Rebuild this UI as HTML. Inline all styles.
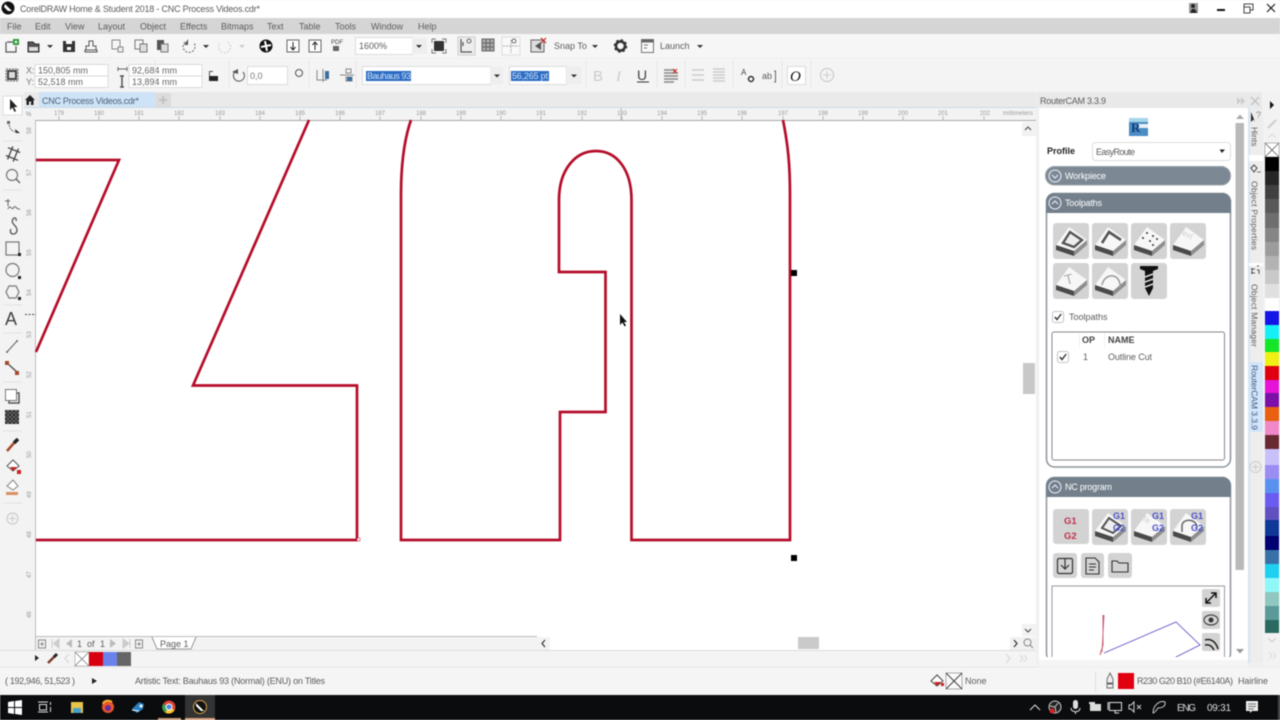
<!DOCTYPE html>
<html><head><meta charset="utf-8"><title>CorelDRAW</title>
<style>
html,body{margin:0;padding:0;width:1280px;height:720px;overflow:hidden;background:#f3f3f3}
svg{display:block;position:absolute;left:0;top:0;filter:blur(.4px)}
text{font-family:"Liberation Sans",sans-serif;font-size:9px}
text:not([fill]){fill:#5c5c5c}
.r text{font-size:6px;fill:#999}
.i{fill:none;stroke:#555;stroke-width:1.2}
.s{stroke:#d8d8d8;stroke-width:1}
</style></head><body>
<svg width="1280" height="720" viewBox="0 0 1280 720" xmlns="http://www.w3.org/2000/svg">
<defs>
<g id="blk"><rect width="36" height="36" rx="3" fill="#d3d3d3"/><path d="M3 22L16 4L34 17L21 28Z" fill="#f7f7f7"/><path d="M3 22L21 28V33L3 27Z" fill="#4a4a4a"/><path d="M21 28L34 17V22L21 33Z" fill="#8e8e8e"/></g>
<g id="chk"><rect x=".5" y=".5" width="11" height="11" rx="2" fill="#fff" stroke="#c4c4c4"/><path d="M2.8 6L5 8.5L9.2 3" fill="none" stroke="#333" stroke-width="1.400"/></g>
</defs>

<!-- title bar -->
<rect width="1280" height="18" fill="#fff"/>
<circle cx="8" cy="8" r="6.500" fill="#111"/><path d="M5 4L12 11L8 11L4 7Z" fill="#fff"/>
<text x="20" y="12" textLength="240">CorelDRAW Home &amp; Student 2018 - CNC Process Videos.cdr*</text>
<rect x="1189" y="3" width="9" height="10" fill="#999"/><circle cx="1193" cy="6" r="2" fill="#222"/><path d="M1190 13L1192 9H1195L1197 13Z" fill="#222"/>
<rect x="1217" y="9" width="8" height="2" fill="#111"/>
<path d="M1244 7V13H1250V7ZM1244 7V4H1253V10H1250" fill="none" stroke="#444"/>
<path d="M1267 4L1275 12M1275 4L1267 12" stroke="#222" stroke-width="1.200"/>

<!-- menu -->
<rect y="18" width="1280" height="16" fill="#d5d5d5"/>
<g>
<text x="7" y="29.500">File</text><text x="35" y="29.500">Edit</text><text x="65" y="29.500">View</text><text x="98" y="29.500">Layout</text><text x="140" y="29.500">Object</text><text x="180" y="29.500">Effects</text><text x="221" y="29.500">Bitmaps</text><text x="267" y="29.500">Text</text><text x="299" y="29.500">Table</text><text x="335" y="29.500">Tools</text><text x="371" y="29.500">Window</text><text x="418" y="29.500">Help</text>
</g>

<!-- toolbar -->
<rect y="34" width="1280" height="24" fill="#f6f6f6"/><rect y="57.500" width="1280" height="1" fill="#e8e8e8"/>
<path d="M7 42H13M6 42V52H16V46" class="i"/><rect x="13" y="39" width="6" height="6" fill="#2a9a3a"/><path d="M14.500 42H17.500M16 40.500V43.500" stroke="#fff"/>
<path d="M28 52V42H33L35 44H39V52Z" fill="#555" stroke="#333"/><rect x="29" y="47" width="9" height="4" fill="#ddd"/>
<path d="M47 45H53L50 48Z" fill="#333"/>
<path d="M63 41H75V52H63Z" fill="#333"/><rect x="66" y="41" width="6" height="3" fill="#fff"/><rect x="67" y="47" width="4" height="3" fill="#fff"/>
<path d="M86 50V46H89V41H93V46H96V50Z M85 50H97V52H85Z" fill="none" stroke="#555"/>
<rect x="112" y="40" width="8" height="9" fill="none" stroke="#888"/><rect x="118" y="47" width="5" height="5" fill="#eee" stroke="#888"/>
<rect x="135" y="40" width="8" height="9" fill="none" stroke="#777"/><rect x="140" y="44" width="7" height="8" fill="#ddd" stroke="#777"/>
<rect x="157" y="40" width="7" height="10" fill="#555"/><rect x="161" y="44" width="7" height="8" fill="#ddd" stroke="#777"/>
<path d="M185 42A6 6 0 1 0 194 43" fill="none" stroke="#666" stroke-dasharray="2 1.500"/><path d="M188 39V45H184Z" fill="#555"/><path d="M203 45H209L206 48Z" fill="#333"/>
<path d="M228 42A6 6 0 1 1 220 43" fill="none" stroke="#ccc" stroke-dasharray="2 1.500"/><path d="M239 45H245L242 48Z" fill="#ccc"/>
<circle cx="266" cy="46" r="6.500" fill="#111"/><path d="M261 47L266 46L265 41M271 45L266 46L267 51" stroke="#fff" stroke-width="2" fill="none"/>
<rect x="287" y="40" width="12" height="12" fill="#fff" stroke="#666"/><path d="M293 42V49M290.500 47L293 50L295.500 47" fill="none" stroke="#222"/>
<rect x="309" y="40" width="12" height="12" fill="#fff" stroke="#666"/><path d="M315 50V43M312.500 45L315 42L317.500 45" fill="none" stroke="#222"/>
<text x="331" y="44" style="font-size:6px" fill="#444">PDF</text><rect x="333" y="46" width="6" height="5" fill="#666"/>
<rect x="355.500" y="37.500" width="57" height="17" fill="#fff" stroke="#ddd"/><text x="359" y="49">1600%</text>
<rect x="412" y="38" width="15" height="16" fill="#eee"/><path d="M416 45H422L419 48Z" fill="#333"/>
<rect x="434" y="41" width="10" height="10" fill="#333"/><path d="M432 39H436M432 39V43M442 39H446V43M432 49V53H436M446 49V53H442" fill="none" stroke="#777"/>
<rect x="458" y="37" width="17" height="18" fill="#eee" stroke="#ccc"/><path d="M461 39V52H472M463 42V46" class="i"/><circle cx="469" cy="41" r="2" fill="none" stroke="#666"/>
<path d="M482 39H494V51H482ZM482 43H494M482 47H494M486 39V51M490 39V51" stroke="#666" fill="#aaa"/>
<rect x="502" y="37" width="18" height="18" fill="#f9f9f9" stroke="#ddd"/><path d="M503 46H519M511 40V53" stroke="#aaa" stroke-dasharray="2 1"/><circle cx="514" cy="41" r="2" fill="none" stroke="#666"/>
<rect x="531" y="40" width="13" height="12" fill="#ddd" stroke="#666"/><path d="M535 46L541 42V50Z" fill="#555"/><path d="M541 38L546 43M546 38L541 43" stroke="#c22" stroke-width="1.200"/>
<text x="554" y="49">Snap To</text><path d="M592 45H598L595 48Z" fill="#333"/>
<circle cx="620.500" cy="46" r="4.500" fill="none" stroke="#333" stroke-width="2.500"/><circle cx="620.500" cy="46" r="6" fill="none" stroke="#333" stroke-width="1.500" stroke-dasharray="2.500 2.200"/>
<rect x="641.500" y="39.500" width="12" height="13" fill="#f8f8f8" stroke="#777"/><rect x="641.500" y="39.500" width="12" height="3" fill="#666"/><path d="M644 45H648M644 48H647" stroke="#777"/>
<text x="660" y="49">Launch</text><path d="M697 45H703L700 48Z" fill="#333"/>

<!-- property bar -->
<rect y="58" width="1280" height="34" fill="#f4f4f4"/>
<rect x="7" y="70" width="10" height="10" fill="#444"/><rect x="9" y="72" width="6" height="6" fill="#ddd"/><path d="M6 69H18V81H6Z" fill="none" stroke="#666" stroke-dasharray="2 1"/>
<text x="26" y="73.500" fill="#777">X:</text><text x="26" y="85" fill="#777">Y:</text>
<rect x="35" y="64.500" width="73" height="23" fill="#fff" stroke="#ddd"/><path d="M35 76H108" class="s"/>
<text x="38" y="73.500" fill="#666">150,805 mm</text><text x="38" y="85" fill="#666">52,518 mm</text>
<path d="M118 69H127M118 67V71M127 67V71" stroke="#666"/><path d="M122 76V87M120 76H124M120 87H124" stroke="#555" stroke-width="1.500"/>
<rect x="129" y="64.500" width="73" height="23" fill="#fff" stroke="#ddd"/><path d="M129 76H202" class="s"/>
<text x="132" y="73.500" fill="#666">92,684 mm</text><text x="132" y="85" fill="#666">13,894 mm</text>
<rect x="209" y="76" width="9" height="5" fill="#222"/><path d="M209.500 76V71.500H213" fill="none" stroke="#555"/>
<path d="M243 72A5.500 5.500 0 1 1 236 71" fill="none" stroke="#555"/><path d="M232 72L238 69V74Z" fill="#555"/>
<rect x="247.500" y="66.500" width="40" height="18" fill="#fff" stroke="#ddd"/><text x="250" y="79" fill="#777">0,0</text>
<circle cx="299" cy="73" r="3.500" fill="none" stroke="#555"/>
<path d="M317 70V80H327M323 69V82" fill="none" stroke="#888"/><rect x="325" y="71" width="4" height="8" fill="#3a6fa0"/>
<path d="M340 75H354M346 69H351V73H346ZM346 77H352V81H346Z" fill="none" stroke="#888"/><rect x="347" y="77" width="5" height="4" fill="#3a6fa0"/>
<rect x="362.500" y="66.500" width="128" height="18" fill="#fff" stroke="#ddd"/>
<rect x="366" y="71" width="45" height="10" fill="#2b6cc4"/><text x="367" y="79" fill="#cfe0f5" textLength="44">Bauhaus 93</text>
<rect x="490" y="67" width="13" height="17" fill="#eee"/><path d="M494 74.500H500L497 77.500Z" fill="#333"/>
<rect x="509.500" y="66.500" width="57" height="18" fill="#fff" stroke="#ddd"/>
<rect x="511" y="71" width="38" height="10" fill="#2b6cc4"/><text x="512" y="79" fill="#cfe0f5" textLength="36">56,265 pt</text>
<rect x="566.500" y="67" width="15" height="17" fill="#eee"/><path d="M571 74.500H577L574 77.500Z" fill="#333"/>
<text x="593" y="81" style="font-size:15px" fill="#ccc">B</text>
<text x="616" y="81" style="font-size:15px;font-family:'Liberation Serif',serif;font-style:italic" fill="#ccc">I</text>
<text x="637" y="80" style="font-size:14px" fill="#444">U</text><rect x="637" y="81.500" width="12" height="1" fill="#333"/>
<path d="M664 70H675M664 73H678M664 76H678M664 79H678M664 82H674" stroke="#888" stroke-width="1.500"/><path d="M673 69L677 73M677 69L673 73" stroke="#c22"/>
<path d="M692 70H704M692 75H704M692 80H704" stroke="#ccc" stroke-width="1.500"/>
<path d="M713 69H725M713 72H725M713 75H725M713 78H725M713 81H725" stroke="#ccc" stroke-width="1.500"/>
<text x="741" y="75" style="font-size:8px" fill="#444">A</text><circle cx="751" cy="79" r="2.500" fill="none" stroke="#333" stroke-width="1.500"/>
<text x="762" y="79" style="font-size:9px">ab</text><path d="M774 71H775.500V82H774" stroke="#666" fill="none"/>
<rect x="787.500" y="66.500" width="18" height="18" fill="#fff" stroke="#ddd"/><text x="790" y="81" style="font-size:15px;font-style:italic;font-family:'Liberation Serif',serif" fill="#111">O</text>
<circle cx="827" cy="75" r="6.500" fill="none" stroke="#ccc" stroke-width="1.200"/><path d="M823 75H831M827 71V79" stroke="#ccc"/>
<path d="M155 60V88M229 60V88M309 60V88M356 60V88M586 60V88M657 60V88M685 60V88M733 60V88M782 60V88M811 60V88" stroke="#e8e8e8" fill="none"/>

<!-- tab bar -->
<rect y="92" width="1036" height="16" fill="#eaeaea"/>
<rect x="0" y="92" width="24" height="558" fill="#f3f3f3"/>
<rect x="39" y="92" width="116" height="15.500" fill="#cfe3f7"/>
<path d="M30 95L25 100H26.500V105H29V101.500H31V105H33.500V100H35Z" fill="#222"/>
<text x="42" y="104" fill="#4a6278" textLength="97">CNC Process Videos.cdr*</text>
<rect x="155" y="93" width="16" height="14" fill="#dcdcdc"/><path d="M159 100H167M163 96V104" stroke="#bbb" stroke-width="1.500"/>
<rect x="24" y="107" width="1012" height="1.500" fill="#c9dbea"/>

<!-- rulers -->
<rect x="24" y="108" width="1012" height="12" fill="#f3f3f3"/>
<rect x="24" y="108" width="12" height="542" fill="#f3f3f3"/>
<rect x="36" y="120" width="1000" height="530" fill="#fff"/>
<rect x="35" y="120" width="1001" height="1" fill="#a8a8a8"/>
<rect x="35" y="120" width="1" height="530" fill="#bcbcbc"/>
<g class="r">
<text x="54" y="115">179</text><text x="94" y="115">180</text><text x="134" y="115">181</text><text x="174" y="115">182</text><text x="215" y="115">183</text><text x="255" y="115">184</text><text x="295" y="115">185</text><text x="335" y="115">186</text><text x="375" y="115">187</text><text x="416" y="115">188</text><text x="456" y="115">189</text><text x="496" y="115">190</text><text x="536" y="115">191</text><text x="577" y="115">192</text><text x="617" y="115">193</text><text x="657" y="115">194</text><text x="697" y="115">195</text><text x="737" y="115">196</text><text x="778" y="115">197</text><text x="818" y="115">198</text><text x="858" y="115">199</text><text x="898" y="115">200</text><text x="938" y="115">201</text><text x="980" y="115">202</text>
<text x="1003" y="115" textLength="30">millimeters</text>
</g>
<path d="M59 116V120M99 116V120M139 116V120M179 116V120M220 116V120M260 116V120M300 116V120M340 116V120M380 116V120M421 116V120M461 116V120M501 116V120M541 116V120M582 116V120M622 116V120M662 116V120M702 116V120M742 116V120M783 116V120M823 116V120M863 116V120M903 116V120M943 116V120M984 116V120M621 108V120" stroke="#bbb"/>
<g class="r">
<text transform="translate(31,134) rotate(-90)">58</text><text transform="translate(31,176) rotate(-90)">57</text><text transform="translate(31,216) rotate(-90)">56</text><text transform="translate(31,256) rotate(-90)">55</text><text transform="translate(31,296) rotate(-90)">54</text><text transform="translate(31,338) rotate(-90)">53</text><text transform="translate(31,378) rotate(-90)">52</text><text transform="translate(31,418) rotate(-90)">51</text><text transform="translate(31,458) rotate(-90)">50</text><text transform="translate(31,498) rotate(-90)">49</text><text transform="translate(31,538) rotate(-90)">48</text><text transform="translate(31,578) rotate(-90)">47</text><text transform="translate(31,618) rotate(-90)">46</text>
</g>
<path d="M25 314.500H36" stroke="#444" stroke-dasharray="2 1.500"/>
<text x="26" y="116" style="font-size:6px" fill="#888">%</text>

<!-- artwork -->
<g fill="none" stroke="#b50d2a" stroke-width="2.700" stroke-linejoin="miter">
<path d="M36 160H119L36 352"/>
<path d="M309 120L193 385.500H357V540H36"/>
<path d="M411 120C404 140 401 165 401 195V540H560V412H605.500V272H559V200C559 170 575 151 596 151C617 151 631.500 170 631.500 200V540H790V195C790 165 788 145 783 120"/>
</g>
<rect x="791" y="270" width="6" height="6" fill="#000"/><rect x="791" y="555" width="6" height="6" fill="#000"/>
<rect x="357" y="538" width="3" height="3" fill="#fff" stroke="#b9122e" stroke-width=".5"/>
<path d="M620 314V325L622.500 322.500L624.500 326.500L626 325.500L624 322H627Z" fill="#111"/>

<!-- v/h scroll -->
<rect x="1022" y="122" width="14" height="14" fill="#f2f2f2"/><path d="M1025 130L1028 127L1031 130" fill="none" stroke="#444"/>
<rect x="1023" y="363" width="12" height="31" fill="#c8c8c8"/>
<rect x="1022" y="624" width="14" height="12" fill="#f2f2f2"/><path d="M1025 629L1028 632L1031 629" fill="none" stroke="#444"/>

<!-- page nav -->
<rect x="36" y="637" width="500" height="13" fill="#f3f3f3"/><path d="M36 636.500H537" stroke="#bdbdbd"/>
<rect x="536" y="637" width="14" height="13" fill="#f3f3f3"/><path d="M545 640L542 643.500L545 647" fill="none" stroke="#333" stroke-width="1.200"/>
<rect x="38.500" y="640" width="7" height="8" fill="none" stroke="#888"/><path d="M42 642V646M40 644H44" stroke="#888"/>
<path d="M52 639V648M59 639L53.500 643.500L59 648Z" fill="#ccc" stroke="#ccc"/>
<path d="M72 639L66 643.500L72 648Z" fill="#bbb"/>
<text x="77" y="647">1</text><text x="87" y="647">of</text><text x="100" y="647">1</text>
<path d="M110 639L116 643.500L110 648Z" fill="#bbb"/>
<path d="M123 639L129 643.500L123 648ZM130 639V648" fill="#ccc" stroke="#ccc"/>
<rect x="135.500" y="640" width="7" height="8" fill="none" stroke="#888"/><path d="M139 642V646M137 644H141" stroke="#888"/>
<path d="M152 637L157 649H191L196 637" fill="#fff" stroke="#999"/><text x="160" y="647">Page 1</text>
<rect x="798" y="637" width="21" height="12" fill="#cacaca"/>
<rect x="1010" y="637" width="26" height="13" fill="#f1f1f1"/>
<path d="M1014 640L1017 643.500L1014 647" fill="none" stroke="#333" stroke-width="1.200"/>
<circle cx="1027.500" cy="642.500" r="3.500" fill="none" stroke="#888"/><path d="M1030 645L1033 648" stroke="#888"/>
<path d="M0 650.500H1036" stroke="#dcdcdc"/>

<!-- bottom palette -->
<rect y="651" width="1036" height="16" fill="#f4f4f4"/>
<path d="M35 655V661L39 658Z" fill="#222"/>
<path d="M48 663L55 656" stroke="#7a3d2a" stroke-width="2.500"/><path d="M54 657L57 654" stroke="#222" stroke-width="3"/>
<path d="M69 654L65 658.500L69 663" fill="none" stroke="#ddd" stroke-width="1.500"/>
<rect x="75" y="652" width="14" height="14" fill="#fff" stroke="#999" stroke-width=".6"/><path d="M75 652L89 666M89 652L75 666" stroke="#777" stroke-width=".8"/>
<rect x="89" y="652" width="14" height="14" fill="#d80010"/><rect x="103" y="652" width="14" height="14" fill="#6b82ea"/><rect x="117" y="652" width="14" height="14" fill="#666"/>
<path d="M1006 654L1010 658.500L1006 663" fill="none" stroke="#ddd" stroke-width="1.500"/>
<path d="M1020 655L1023 658.500L1020 662M1024 655L1027 658.500L1024 662" fill="none" stroke="#ddd" stroke-width="1.200"/>

<!-- status bar -->
<rect y="667" width="1280" height="28" fill="#f5f5f5"/><path d="M0 667H1280" stroke="#e6e6e6"/>
<text x="5" y="684" textLength="70">( 192,946, 51,523 )</text>
<path d="M92 678V684L97 681Z" fill="#222"/>
<text x="135" y="684" textLength="190">Artistic Text: Bauhaus 93 (Normal) (ENU) on Titles</text>
<path d="M931 681L937 675L943 681L937 686Z" fill="#fff" stroke="#444"/><path d="M934 682H941L937 686Z" fill="#c22"/><rect x="941" y="683" width="3" height="3" fill="#c22"/>
<rect x="946" y="673" width="16" height="16" fill="#fafafa" stroke="#777" stroke-width=".6"/><path d="M946 673L962 689M962 673L946 689" stroke="#444"/>
<text x="965" y="684">None</text>
<path d="M1095.500 672V692" stroke="#e0e0e0"/>
<path d="M1110 673L1113 679V683H1107V679ZM1107 684H1113V688H1107Z" fill="#eee" stroke="#666" stroke-width=".9"/>
<rect x="1118" y="673" width="16" height="16" fill="#e0000f"/>
<text x="1137" y="684" textLength="96">R230 G20 B10 (#E6140A)</text>
<text x="1238" y="684" textLength="30">Hairline</text>

<!-- docker -->
<rect x="1036" y="92" width="3" height="570" fill="#eef0f2"/>
<rect x="1037" y="92" width="225" height="16" fill="#e9e9e9"/>
<rect x="1039" y="108" width="209" height="554" fill="#fff"/>
<rect x="1036" y="660" width="228" height="7" fill="#f0f0f0"/>
<text x="1040" y="104" textLength="66">RouterCAM 3.3.9</text>
<path d="M1237 97L1241 101L1237 105ZM1241 97L1245 101L1241 105Z" fill="#ccc"/><path d="M1251 97L1259 105M1259 97L1251 105" stroke="#bbb" stroke-width="1.200"/>
<rect x="1129" y="118" width="19" height="18" fill="#4a8cc4"/><rect x="1129" y="118" width="19" height="4" fill="#a5d5e8"/><rect x="1138" y="124" width="10" height="4" fill="#e6f2f8"/><text x="1131" y="132" style="font-size:13px;font-weight:bold;font-family:'Liberation Serif',serif" fill="#143a7a">R</text>
<text x="1047" y="154" style="font-weight:bold" fill="#222">Profile</text>
<rect x="1092.500" y="142.500" width="138" height="18" rx="3" fill="#fff" stroke="#ddd"/><text x="1096" y="155" textLength="39">EasyRoute</text>
<path d="M1219.500 149.500H1225L1222 153Z" fill="#222"/>
<rect x="1045.500" y="166.500" width="185" height="18.500" rx="9" fill="#7c8994" stroke="#9aa3aa"/>
<circle cx="1055" cy="176" r="6" fill="none" stroke="#eef" stroke-width="1"/><path d="M1052 175L1055 178L1058 175" fill="none" stroke="#eef"/>
<text x="1065" y="179" fill="#fff" textLength="41">Workpiece</text>

<rect x="1046.500" y="193.500" width="184" height="273.500" rx="8" fill="#fff" stroke="#8c949b" stroke-width="1.500"/>
<path d="M1046 213V202C1046 196 1050 193 1054 193H1222C1227 193 1231 196 1231 202V213Z" fill="#73808c"/>
<circle cx="1055" cy="203" r="6" fill="none" stroke="#eef"/><path d="M1052 204L1055 201L1058 204" fill="none" stroke="#eef"/>
<text x="1065" y="206" fill="#fff" textLength="37">Toolpaths</text>

<use href="#blk" x="1053" y="223"/><path d="M1063 243L1070 232L1082 240L1074 247Z" fill="#eee" stroke="#555" stroke-width="2.400"/>
<use href="#blk" x="1092" y="223"/><path d="M1102 243L1109 232L1121 240" fill="none" stroke="#555" stroke-width="2.600"/>
<use href="#blk" x="1131" y="223"/><g fill="#333"><circle cx="1147" cy="233" r="1"/><circle cx="1153" cy="236" r="1"/><circle cx="1143" cy="238" r="1"/><circle cx="1150" cy="241" r="1"/><circle cx="1157" cy="239" r="1"/><circle cx="1153" cy="245" r="1"/></g>
<use href="#blk" x="1170" y="223"/><text transform="translate(1178,233) rotate(25)" style="font-size:8px" fill="#ccc">Text</text>
<use href="#blk" x="1053" y="263"/><text transform="translate(1066,285) rotate(-15)" style="font-size:14px" fill="#aaa">T</text>
<use href="#blk" x="1092" y="263"/><path d="M1102 285C1104 274 1118 272 1120 284V288" fill="none" stroke="#999" stroke-width="1.500"/>
<rect x="1131" y="263" width="36" height="36" rx="3" fill="#d3d3d3"/>
<path d="M1140 266H1158V269L1153 271H1145L1140 269Z" fill="#111"/><path d="M1145 271H1153V288L1149 296L1145 288Z" fill="#111"/><path d="M1145 277L1153 274M1145 282L1153 279M1145 287L1153 284" stroke="#ddd" stroke-width="1.500"/>

<use href="#chk" x="1052" y="311"/><text x="1069" y="320">Toolpaths</text>
<rect x="1052" y="332" width="172.500" height="128" rx="2" fill="#fff" stroke="#888"/>
<path d="M1079.500 334V347M1104.500 334V347" stroke="#eee"/>
<text x="1082" y="343" style="font-weight:bold" fill="#444">OP</text><text x="1108" y="343" style="font-weight:bold" fill="#444">NAME</text>
<use href="#chk" x="1057" y="351"/><text x="1083" y="360">1</text><text x="1108" y="360" textLength="44">Outline Cut</text>

<rect x="1046.500" y="477.500" width="184" height="184" rx="8" fill="#fff" stroke="#8c949b" stroke-width="1.500"/>
<path d="M1046 497V486C1046 480 1050 477 1054 477H1222C1227 477 1231 480 1231 486V497Z" fill="#73808c"/>
<circle cx="1055" cy="487" r="6" fill="none" stroke="#eef"/><path d="M1052 488L1055 485L1058 488" fill="none" stroke="#eef"/>
<text x="1065" y="490" fill="#fff" textLength="47">NC program</text>

<rect x="1053" y="509" width="36" height="35" rx="3" fill="#d3d3d3"/>
<text x="1064" y="524" style="font-weight:bold;font-size:9.500px" fill="#c03050">G1</text><text x="1064" y="539" style="font-weight:bold;font-size:9.500px" fill="#c03050">G2</text>
<use href="#blk" x="1092" y="509"/><path d="M1102 528L1109 518L1121 526L1113 533Z" fill="#eee" stroke="#555" stroke-width="2"/><text x="1113" y="519" style="font-weight:bold" fill="#4a50c8">G1</text><text x="1113" y="531" style="font-weight:bold" fill="#4a50c8">G2</text>
<use href="#blk" x="1131" y="509"/><text transform="translate(1141,520) rotate(25)" style="font-size:8px" fill="#ccc">Te</text><text x="1152" y="519" style="font-weight:bold" fill="#4a50c8">G1</text><text x="1152" y="531" style="font-weight:bold" fill="#4a50c8">G2</text>
<use href="#blk" x="1170" y="509"/><path d="M1182 532V526C1182 518 1197 518 1197 528" fill="none" stroke="#666" stroke-width="1.500"/><text x="1191" y="519" style="font-weight:bold" fill="#4a50c8">G1</text><text x="1191" y="531" style="font-weight:bold" fill="#4a50c8">G2</text>

<rect x="1053" y="553" width="24" height="25" rx="3" fill="#d3d3d3"/><rect x="1057.500" y="558.500" width="15" height="15" rx="1.500" fill="none" stroke="#333" stroke-width="1.200"/><path d="M1065 559V569M1061 565L1065 569L1069 565" fill="none" stroke="#333" stroke-width="1.200"/>
<rect x="1081" y="553" width="23" height="25" rx="3" fill="#d3d3d3"/><path d="M1086 558H1095L1099 562V574H1086ZM1089 564H1096M1089 567H1096M1089 570H1094" fill="none" stroke="#333" stroke-width="1.100"/>
<rect x="1108" y="553" width="24" height="25" rx="3" fill="#d3d3d3"/><path d="M1112 572V561H1117L1119 563H1128V572Z" fill="none" stroke="#333" stroke-width="1.100"/>

<rect x="1052" y="586" width="172.500" height="80" fill="#fff" stroke="#999"/>
<path d="M1103 615V645L1100 655" fill="none" stroke="#c8506a" stroke-width="1"/><path d="M1104 615L1102 652" stroke="#d06a80" stroke-width="1"/>
<path d="M1104 653L1176 622L1200 645L1174 658" fill="none" stroke="#5a4ac0" stroke-width=".8"/>
<rect x="1202" y="589" width="18" height="18" rx="2" fill="#d3d3d3"/><path d="M1206 603L1216 593M1206 598V603H1211M1211 593H1216V598" fill="none" stroke="#111" stroke-width="1.500"/>
<rect x="1202" y="611" width="18" height="18" rx="2" fill="#d3d3d3"/><ellipse cx="1211" cy="620" rx="7" ry="5" fill="none" stroke="#333"/><circle cx="1211" cy="620" r="2.500" fill="#333"/>
<rect x="1202" y="633" width="18" height="18" rx="2" fill="#d3d3d3"/><path d="M1205 640C1211 638 1216 642 1218 649M1205 645C1209 644 1212 646 1214 650" fill="none" stroke="#222" stroke-width="1.500"/>
<rect x="1039" y="657" width="209" height="10" fill="#f5f5f5"/>
<rect x="1039" y="657" width="209" height="3" fill="#fff"/>

<rect x="1235" y="111" width="10" height="546" fill="#fff"/>
<rect x="1235.500" y="123" width="8.500" height="447" fill="#b9b9b9"/>
<path d="M1236 119L1240 114.500L1244 119Z" fill="#aaa"/><path d="M1236 649H1244L1240 653.500Z" fill="#999"/>

<!-- vertical tabs -->
<rect x="1248" y="108" width="3" height="555" fill="#d7e4f0"/>
<rect x="1250" y="108" width="13" height="555" fill="#ededed"/>
<rect x="1249" y="362" width="14" height="70" fill="#d3e5f8"/>
<rect x="1249" y="155" width="14" height="6" fill="#fff"/><rect x="1249" y="263" width="14" height="3" fill="#fff"/>
<path d="M1251 112V122L1253.500 119.500L1255 122" fill="#222"/><text x="1256" y="118" style="font-size:9px" fill="#888">?</text>
<text transform="translate(1251.500,127) rotate(90)" style="font-size:8.500px">Hints</text>
<path d="M1251 168L1254 165L1257 168L1254 172Z" fill="none" stroke="#444"/><path d="M1257 172H1261" stroke="#777"/>
<text transform="translate(1251.500,181) rotate(90)" style="font-size:8.500px" textLength="69">Object Properties</text>
<path d="M1251 269H1255M1251 273H1255M1252 268V274M1257 270H1259V274M1257 266H1259" stroke="#555" fill="none"/>
<text transform="translate(1251.500,284) rotate(90)" style="font-size:8.500px" textLength="63">Object Manager</text>
<text transform="translate(1251.500,365) rotate(90)" style="font-size:8.500px" textLength="65" fill="#3a5a80">RouterCAM 3.3.9</text>
<circle cx="1255.500" cy="467" r="5.500" fill="none" stroke="#ccc"/><path d="M1252 467H1259M1255.500 463.500V470.500" stroke="#ccc"/>

<!-- palette -->
<rect x="1263" y="92" width="17" height="575" fill="#f2f2f2"/>
<path d="M1270 101V109L1274 105Z" fill="#111"/>
<path d="M1268 128L1276 120" stroke="#ccc" stroke-width="2"/>
<path d="M1268 138L1272 134L1276 138" fill="none" stroke="#ddd"/>
<rect x="1265" y="143" width="14" height="14" fill="#fff" stroke="#888" stroke-width=".6"/><path d="M1265 143L1279 157M1279 143L1265 157" stroke="#666" stroke-width=".8"/>
<g>
<rect x="1265" y="157" width="14" height="14" fill="#000"/><rect x="1265" y="171" width="14" height="14" fill="#262626"/><rect x="1265" y="185" width="14" height="14" fill="#404040"/><rect x="1265" y="199" width="14" height="14" fill="#595959"/><rect x="1265" y="213" width="14" height="15" fill="#6e6e6e"/><rect x="1265" y="228" width="14" height="14" fill="#858585"/><rect x="1265" y="242" width="14" height="14" fill="#9c9c9c"/><rect x="1265" y="256" width="14" height="14" fill="#b3b3b3"/><rect x="1265" y="270" width="14" height="14" fill="#c9c9c9"/><rect x="1265" y="284" width="14" height="14" fill="#e0e0e0"/><rect x="1265" y="298" width="14" height="13" fill="#fff"/>
<rect x="1265" y="311" width="14" height="14" fill="#1414e6"/><rect x="1265" y="325" width="14" height="14" fill="#14f0f5"/><rect x="1265" y="339" width="14" height="13" fill="#14e628"/><rect x="1265" y="352" width="14" height="14" fill="#f0f014"/><rect x="1265" y="366" width="14" height="14" fill="#e00010"/><rect x="1265" y="380" width="14" height="13" fill="#e614d8"/><rect x="1265" y="393" width="14" height="14" fill="#7a10a8"/><rect x="1265" y="407" width="14" height="14" fill="#e86010"/><rect x="1265" y="421" width="14" height="14" fill="#f088c8"/><rect x="1265" y="435" width="14" height="14" fill="#682a30"/><rect x="1265" y="449" width="14" height="16" fill="#c8c0f8"/>
<rect x="1265" y="465" width="14" height="14" fill="#9a8cf0"/><rect x="1265" y="479" width="14" height="14" fill="#5a90f0"/><rect x="1265" y="493" width="14" height="14" fill="#6a5cf0"/><rect x="1265" y="507" width="14" height="13" fill="#6050c0"/><rect x="1265" y="520" width="14" height="16" fill="#103898"/><rect x="1265" y="536" width="14" height="14" fill="#000070"/><rect x="1265" y="550" width="14" height="14" fill="#3a70a8"/><rect x="1265" y="564" width="14" height="14" fill="#20d0f0"/><rect x="1265" y="578" width="14" height="14" fill="#90f8f8"/><rect x="1265" y="592" width="14" height="14" fill="#90c8c0"/><rect x="1265" y="606" width="14" height="14" fill="#5a9a98"/><rect x="1265" y="620" width="14" height="13" fill="#2a6a60"/>
</g>
<path d="M1268 638L1272 642L1276 638" fill="none" stroke="#ccc"/>
<path d="M1269 652L1272 655.500L1269 659M1273 652L1276 655.500L1273 659" fill="none" stroke="#ddd"/>

<!-- taskbar -->
<rect y="695" width="1280" height="25" fill="#0b0c0e"/>
<rect x="185" y="695" width="30" height="25" fill="#333"/>
<rect x="158" y="718" width="23" height="2" fill="#c89878"/><rect x="185" y="718" width="30" height="2" fill="#d8a080"/>
<path d="M8 702L14 701V707H8ZM15 701L22 700V707H15ZM8 708H14V714L8 713ZM15 708H22V715L15 714Z" fill="#fff"/>
<path d="M38 702H48M38 712H48" stroke="#ddd"/><rect x="39.500" y="704.500" width="7" height="5.500" fill="none" stroke="#ddd"/><path d="M50.500 702V705M50.500 707V712" stroke="#ddd"/>
<path d="M71 702H83V713H71Z" fill="#e8c44a"/><rect x="73" y="708" width="8" height="5" fill="#4aa0c8"/>
<circle cx="108" cy="707" r="6" fill="#e8552a"/><circle cx="108" cy="708" r="3" fill="#6a2a9a"/><path d="M103 704C104 700 109 700 112 702" stroke="#f8b030" stroke-width="2" fill="none"/>
<path d="M132 709L139 702L144 704L143 709L137 713Z" fill="#2a80c0"/><circle cx="141" cy="706" r="1.500" fill="#fff"/><path d="M132 710L139 711" stroke="#fff"/>
<circle cx="169" cy="707" r="6.500" fill="#dd4433"/><path d="M169 707L174.500 710A6.500 6.500 0 0 1 165 712.500Z" fill="#f8c830"/><path d="M169 707L165 712.500A6.500 6.500 0 0 1 163 704Z" fill="#3aa050"/><circle cx="169" cy="707" r="3" fill="#4a88e8" stroke="#fff"/>
<circle cx="200" cy="707" r="6.500" fill="#111" stroke="#d0a040"/><path d="M196 703L204 711L201 711L196 706Z" fill="#fff"/>
<path d="M1030 710L1035 705L1040 710" fill="none" stroke="#ddd"/>
<circle cx="1055" cy="707" r="6" fill="#222" stroke="#ccc"/><path d="M1055 707L1058 703M1055 707L1050 706M1055 707L1056 712" stroke="#ccc"/><circle cx="1052" cy="711" r="2.500" fill="#d22"/>
<rect x="1073" y="700" width="5" height="9" rx="2.500" fill="#ddd"/><path d="M1071 708C1071 713 1080 713 1080 708M1075.500 712V714" stroke="#ddd" fill="none"/>
<rect x="1090" y="704" width="11" height="7" fill="#ddd"/><rect x="1089" y="702" width="6" height="2" fill="#ddd"/>
<rect x="1109.500" y="702.500" width="12" height="8" fill="none" stroke="#ddd"/><path d="M1115 711V713H1119M1108 702V710" stroke="#ddd" fill="none"/>
<path d="M1129 705H1131L1134 702V712L1131 709H1129Z" fill="none" stroke="#ccc"/><path d="M1137 705L1141 709M1141 705L1137 709" stroke="#ccc"/>
<path d="M1153 713C1153 705 1160 700 1165 702C1166 707 1161 708 1158 708C1156 711 1154 713 1153 713Z" fill="none" stroke="#ccc"/>
<text x="1177" y="711" style="font-size:10px" fill="#ddd" textLength="19">ENG</text>
<text x="1207" y="711" style="font-size:10px" fill="#ddd" textLength="24">09:31</text>
<path d="M1246 701H1258V711H1252L1250 713V711H1246Z" fill="#eee"/><path d="M1248 704H1256M1248 706.500H1256M1248 709H1254" stroke="#444" stroke-width=".7"/>
<path d="M1278.500 695V720" stroke="#555"/>

<!-- left toolbox -->
<rect x="3" y="96" width="19" height="19" fill="#fff" stroke="#ddd"/>
<path d="M10 99V110L12.500 107.500L14.500 112L16 111L14 107H17.500Z" fill="#222"/>
<path d="M8 122L11 130L18 133" fill="none" stroke="#666" stroke-dasharray="2 1"/><rect x="7" y="121" width="3" height="3" fill="#666"/><path d="M15 129L20 133L16 133Z" fill="#333"/>
<path d="M6 150H19M7 158H20M10 147V161M16 147V161" stroke="#444" stroke-width="1.300" fill="none" transform="rotate(22 13 154)"/>
<circle cx="12" cy="175" r="5.500" fill="none" stroke="#777" stroke-width="1.200"/><path d="M16 179L20 183" stroke="#666" stroke-width="1.500"/>
<path d="M8 199V206M5 201H10" stroke="#666"/><path d="M8 209C10 203 12 212 14 207C15 205 17 210 20 209" fill="none" stroke="#666"/>
<path d="M11 229C8 235 17 236 17 230C17 225 10 224 13 219C14 217 17 218 16 221" fill="none" stroke="#555" stroke-width="1.300"/>
<rect x="6" y="242" width="13" height="13" fill="none" stroke="#777" stroke-width="1.200"/><rect x="18" y="253" width="3" height="3" fill="#222"/>
<circle cx="12.500" cy="270" r="6.500" fill="none" stroke="#777" stroke-width="1.200"/><rect x="18" y="276" width="3" height="3" fill="#222"/>
<path d="M9 286H16L19 292L16 298H9L6 292Z" fill="none" stroke="#777" stroke-width="1.200"/><rect x="18" y="297" width="3" height="3" fill="#222"/>
<text x="5" y="325" style="font-size:18px" fill="#444">A</text>
<path d="M7 352L17 341" stroke="#666"/><circle cx="7" cy="352" r="1" fill="#666"/><circle cx="17" cy="341" r="1" fill="#666"/>
<path d="M7 363L17 372" stroke="#555" stroke-width="1.500"/><rect x="5" y="361" width="4" height="4" fill="#a5492a"/><rect x="15" y="371" width="4" height="4" fill="#a5492a"/>
<rect x="5.500" y="389.500" width="11" height="11" fill="#fff" stroke="#777"/><path d="M17 393H19V403H9V401" fill="none" stroke="#555" stroke-width="1.500"/>
<rect x="5" y="410" width="14" height="14" fill="#333"/><path d="M5 413H19M5 417H19M5 421H19M8 410V424M12 410V424M16 410V424" stroke="#888" stroke-dasharray="2 2"/>
<path d="M7 451L14 443" stroke="#a5492a" stroke-width="2.500"/><path d="M14 443L18 439" stroke="#222" stroke-width="3.500"/>
<path d="M7 466L13 460L19 466L13 471Z" fill="#fff" stroke="#555"/><path d="M10 467H17L13 471Z" fill="#c22"/><rect x="17" y="470" width="4" height="4" fill="#c22"/>
<path d="M7 486L13 480L18 486L13 490Z" fill="#fff" stroke="#888"/><rect x="6" y="492" width="12" height="3" fill="#d89060"/>
<circle cx="12.500" cy="518.500" r="5.500" fill="none" stroke="#ccc" stroke-width="1.200"/><path d="M9 518.500H16M12.500 515V522" stroke="#ccc"/>
<path d="M3 141H22M3 190H22M3 305H22M3 333H22M3 382H22M3 431H22M3 503H22" stroke="#e2e2e2"/>
</svg>
</body></html>
